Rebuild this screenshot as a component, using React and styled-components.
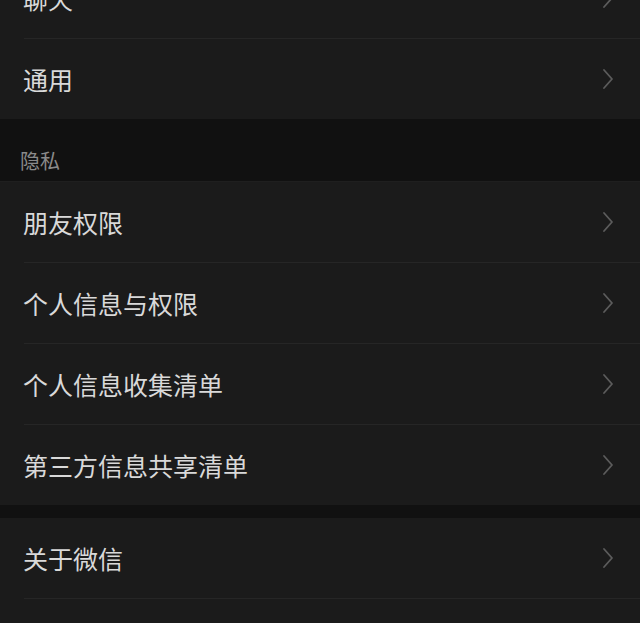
import React from 'react';
import styled, { createGlobalStyle } from 'styled-components';

const GlobalStyle = createGlobalStyle`
  html, body {
    margin: 0;
    padding: 0;
    background-color: #111111;
    overflow: hidden;
  }
`;

const Page = styled.div`
  width: 640px;
  height: 623px;
  overflow: hidden;
  background-color: #111111;
  font-family: 'Noto Sans CJK SC', 'Noto Sans', sans-serif;
`;

const List = styled.div`
  display: flex;
  flex-direction: column;
  margin-top: -42px;
`;

const Group = styled.section`
  background-color: #1b1b1b;
  display: flex;
  flex-direction: column;
`;

const SectionHeader = styled.div`
  height: 63px;
  box-sizing: border-box;
  padding: 28px 0 0 20px;
  font-size: 20px;
  line-height: 28px;
  color: #8a8a8a;
  border-bottom: 1px solid #1f1f1f;
`;

const Gap = styled.div`
  height: ${(props) => props.size}px;
`;

const Row = styled.div`
  position: relative;
  height: 80px;
  display: flex;
  align-items: center;
  justify-content: space-between;
  padding: 0 26px 0 23px;
  box-sizing: border-box;
  ${(props) =>
    props.divider &&
    `
    margin-bottom: 1px;
    &::after {
      content: '';
      position: absolute;
      left: 24px;
      right: 0;
      bottom: -1px;
      height: 1px;
      background-color: #262626;
    }
  `}
`;

const Label = styled.span`
  font-size: 25px;
  line-height: 32px;
  color: #d9d9d9;
  letter-spacing: 0;
`;

const Chevron = () => (
  <svg width="12" height="22" viewBox="0 0 12 22">
    <path
      d="M2 2 L10 11 L2 20"
      fill="none"
      stroke="#5c5c5c"
      strokeWidth="1.8"
      strokeLinecap="round"
      strokeLinejoin="round"
    />
  </svg>
);

const Item = ({ label, divider }) => (
  <Row divider={divider}>
    <Label>{label}</Label>
    {label && <Chevron />}
  </Row>
);

const renderGroup = (items) =>
  items.map((label, i) => (
    <Item key={label || i} label={label} divider={i < items.length - 1} />
  ));

const App = () => (
  <Page>
    <GlobalStyle />
    <List>
      <Group>{renderGroup(['聊天', '通用'])}</Group>
      <SectionHeader>隐私</SectionHeader>
      <Group>
        {renderGroup([
          '朋友权限',
          '个人信息与权限',
          '个人信息收集清单',
          '第三方信息共享清单',
        ])}
      </Group>
      <Gap size={13} />
      <Group>{renderGroup(['关于微信', ''])}</Group>
    </List>
  </Page>
);

export default App;
